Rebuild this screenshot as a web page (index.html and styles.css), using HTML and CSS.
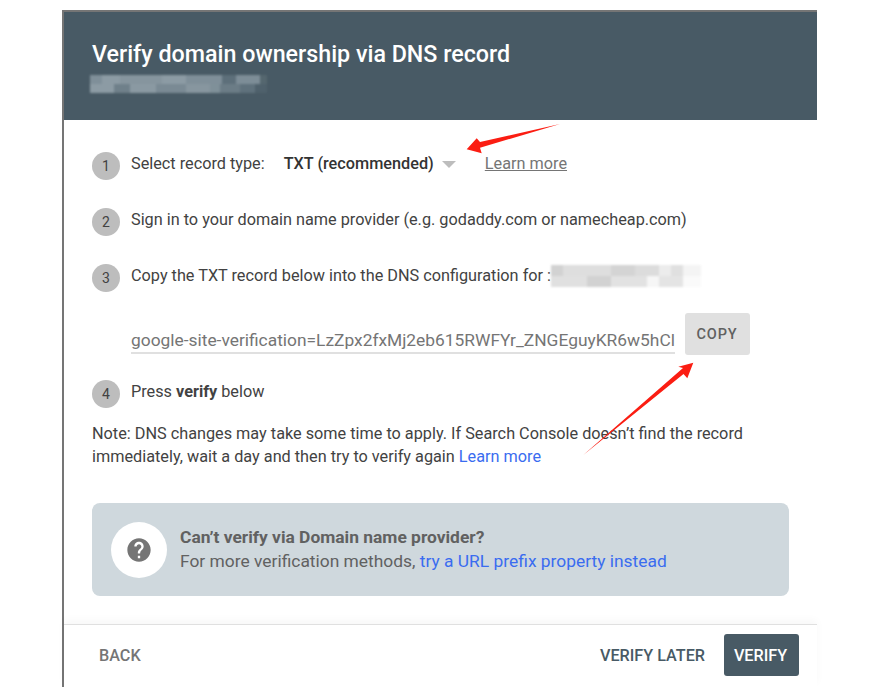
FILE: index.html
```html
<!DOCTYPE html>
<html lang="en">
<head>
<meta charset="utf-8">
<title>Verify domain ownership via DNS record</title>
<link rel="stylesheet" href="styles.css">
</head>
<body>
<main class="dialog">
  <header class="dialog-head">
    <h1 class="dialog-title">Verify domain ownership via DNS record</h1>
    <div class="blur blur-head"></div>
  </header>
  <section class="dialog-body">
    <div class="step">
      <span class="step-num">1</span>
      <span class="step-label">Select record type:</span>
      <span class="record-type">TXT (recommended)</span>
      <span class="caret"></span>
      <a class="learn-grey" href="#">Learn more</a>
    </div>
    <div class="step">
      <span class="step-num">2</span>
      <span>Sign in to your domain name provider (e.g. godaddy.com or namecheap.com)</span>
    </div>
    <div class="step step-tight">
      <span class="step-num">3</span>
      <span>Copy the TXT record below into the DNS configuration for :</span>
      <div class="blur blur-body"></div>
    </div>
    <div class="token-row">
      <div class="token-field"><span class="token-text">google-site-verification=LzZpx2fxMj2eb615RWFYr_ZNGEguyKR6w5hCl</span></div>
      <button class="copy-btn" type="button">COPY</button>
    </div>
    <div class="step step-last">
      <span class="step-num">4</span>
      <span>Press <b class="strong">verify</b> below</span>
    </div>
    <p class="note">Note: DNS changes may take some time to apply. If Search Console doesn’t find the record<br>immediately, wait a day and then try to verify again <a class="link" href="#">Learn more</a></p>
    <aside class="callout">
      <span class="callout-icon">
        <svg viewBox="0 0 24 24" width="28" height="28" aria-hidden="true"><path fill="#757575" d="M12 2C6.48 2 2 6.48 2 12s4.48 10 10 10 10-4.48 10-10S17.52 2 12 2zm1 17h-2v-2h2v2zm2.07-7.75l-.9.92C13.45 12.9 13 13.5 13 15h-2v-.5c0-1.1.45-2.1 1.17-2.83l1.24-1.26c.37-.36.59-.86.59-1.41 0-1.1-.9-2-2-2s-2 .9-2 2H8c0-2.21 1.79-4 4-4s4 1.79 4 4c0 .88-.36 1.68-.93 2.25z"/></svg>
      </span>
      <div class="callout-text">
        <div class="callout-title">Can’t verify via Domain name provider?</div>
        <div>For more verification methods, <a class="link" href="#">try a URL prefix property instead</a></div>
      </div>
    </aside>
  </section>
  <footer class="dialog-foot">
    <button class="btn btn-back" type="button">BACK</button>
    <div class="foot-right">
      <button class="btn btn-later" type="button">VERIFY LATER</button>
      <button class="btn btn-verify" type="button">VERIFY</button>
    </div>
  </footer>
</main>
<svg class="arrows" viewBox="0 0 879 687" width="879" height="687" aria-hidden="true">
  <polygon fill="#fb1d12" points="560,124 480,142 476.7,138.3 466.7,149.3 481.7,153.3 480,147.7"/>
  <polygon fill="#fb1d12" points="583.3,455 683,368 678.3,366.7 693.3,362.7 687.3,378.3 683.5,374"/>
</svg>
</body>
</html>
```
FILE: styles.css
```css
* { box-sizing: border-box; }
html, body { margin: 0; padding: 0; background: #fff; height: 687px; overflow: hidden; }
body {
  position: relative;
  padding: 10px 0 0 62px;
  font-family: Roboto, "Liberation Sans", sans-serif;
  font-size: 16.25px;
  line-height: 24px;
  color: #424242;
}
.dialog {
  width: 755px;
  height: 677px;
  border-left: 2px solid #757575;
  border-top: 2px solid #757575;
  display: flex;
  flex-direction: column;
}
.dialog-head {
  height: 108px;
  flex: none;
  background: #485a65;
  padding: 27px 0 0 28px;
}
.dialog-title {
  margin: 0;
  font-size: 23.25px;
  line-height: 30px;
  font-weight: 500;
  color: #fff;
}
.blur { flex: none; filter: blur(.8px); }
.blur-head {
  width: 177px;
  height: 18px;
  margin: 6px 0 0 -2px;
  background-repeat: no-repeat;
  background-size: 100% 50%;
  background-position: 0 0, 0 100%;
  background-image:
    linear-gradient(90deg, #7f8f99 0 12px, #8c9ba4 12px 30px, #86959e 30px 72px, #8c9ba4 72px 96px, #7f8f99 96px 132px, #5d6f7a 132px 146px, #7d8d97 146px 170px, #55676f 170px 177px),
    linear-gradient(90deg, #8c9ba4 0 24px, #6f808a 24px 40px, #8a99a2 40px 66px, #7a8a94 66px 96px, #87969f 96px 120px, #7f9099 120px 130px, #6b7c86 130px 150px, #5f717c 150px 165px, #4f616c 165px 177px);
}
.blur-body {
  width: 150px;
  height: 22px;
  margin: 1px 0 0 0;
  background-repeat: no-repeat;
  background-size: 100% 50%;
  background-position: 0 0, 0 100%;
  background-image:
    linear-gradient(90deg, #d2d2d2 0 12px, #dedede 12px 60px, #d4d4d4 60px 84px, #dcdcdc 84px 108px, #ececec 108px 120px, #e0e0e0 120px 132px, #f4f4f4 132px 150px),
    linear-gradient(90deg, #e0e0e0 0 36px, #d2d2d2 36px 60px, #e2e2e2 60px 96px, #f6f6f6 96px 108px, #e4e4e4 108px 132px, #fafafa 132px 150px);
}
.dialog-body {
  flex: 1;
  padding: 32px 28px 0 28px;
  position: relative;
}
.step {
  display: flex;
  align-items: flex-start;
  gap: 11px;
  height: 28px;
  margin-bottom: 28px;
  white-space: nowrap;
}
.step-tight { margin-bottom: 21px; gap: 0; }
.step-tight .step-num { margin-right: 11px; }
.step-last { margin-bottom: 14px; }
.step-num {
  flex: none;
  width: 28px;
  height: 28px;
  border-radius: 50%;
  background: #bdbdbd;
  color: #424242;
  font-size: 14px;
  line-height: 29px;
  text-align: center;
}
.step-label { margin-right: 8px; }
.record-type { font-weight: 500; color: #333; }
.caret {
  width: 0;
  height: 0;
  margin: 9px 18px 0 -3px;
  border-left: 7px solid transparent;
  border-right: 7px solid transparent;
  border-top: 7px solid #bdbdbd;
}
.learn-grey { color: #757575; text-decoration: underline; }
.token-row {
  display: flex;
  align-items: flex-start;
  margin: 0 0 25px 39px;
  gap: 10px;
  height: 42px;
}
.token-field {
  width: 544px;
  height: 41px;
  padding-top: 15px;
  border-bottom: 2px solid #e0e0e0;
  overflow: hidden;
  white-space: nowrap;
  color: #757575;
  font-size: 17.38px;
}
.token-text { display: block; }
.copy-btn {
  width: 65px;
  height: 42px;
  border: 0;
  border-radius: 3px;
  background: #e0e0e0;
  color: #616161;
  font: 500 14.5px/20px Roboto, sans-serif;
  letter-spacing: .9px;
  padding: 2px 1px 0 0;
}
.strong { font-weight: 700; }
.note {
  margin: 0 0 35px;
  line-height: 23px;
  white-space: nowrap;
}
.link { color: #3a6cf0; text-decoration: none; }
.callout {
  width: 697px;
  height: 93px;
  background: #cfd8dd;
  border-radius: 8px;
  display: flex;
  align-items: center;
  padding-left: 19px;
  gap: 13px;
  font-size: 17.4px;
}
.callout-icon {
  flex: none;
  width: 56px;
  height: 56px;
  border-radius: 50%;
  background: #fff;
  display: flex;
  align-items: center;
  justify-content: center;
}
.callout-text { color: #616161; margin-top: -1px; }
.callout-title { font-weight: 700; }
.dialog-foot {
  flex: none;
  height: 63px;
  border-top: 1px solid #e0e0e0;
  box-shadow: 0 -4px 8px rgba(0,0,0,.03);
  display: flex;
  align-items: flex-start;
  justify-content: space-between;
  padding: 9px 18px 0 35px;
  position: relative;
}
.foot-right { display: flex; gap: 19px; }
.btn {
  border: 0;
  background: none;
  padding: 1px 0 0;
  height: 42px;
  font: 500 16.2px/42px Roboto, sans-serif;
}
.btn-back { color: #757575; }
.btn-later { color: #485a65; }
.btn-verify {
  width: 75px;
  padding-right: 2px;
  background: #485a65;
  color: #fff;
  border-radius: 3px;
}
.arrows { position: absolute; left: 0; top: 0; pointer-events: none; }
```
